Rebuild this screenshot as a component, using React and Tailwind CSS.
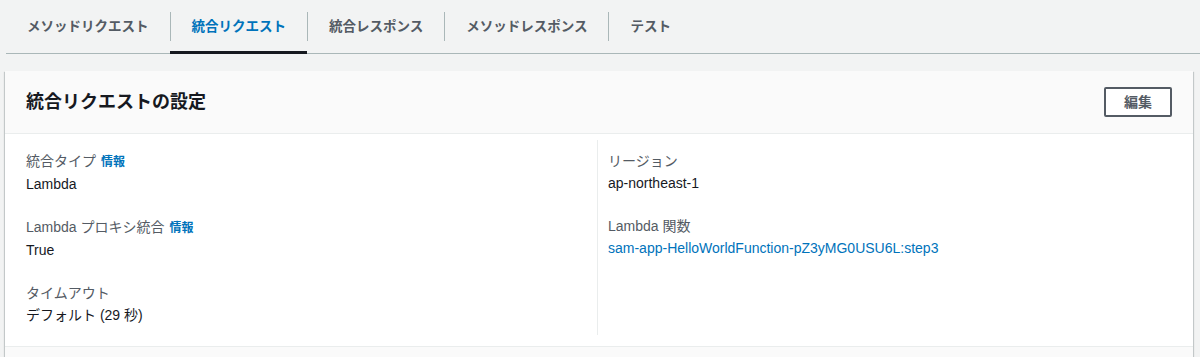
const TABS = [
  { label: 'メソッドリクエスト' },
  { label: '統合リクエスト', active: true },
  { label: '統合レスポンス' },
  { label: 'メソッドレスポンス' },
  { label: 'テスト' },
]

const LEFT = [
  { label: '統合タイプ', info: true, value: 'Lambda' },
  { label: 'Lambda プロキシ統合', info: true, value: 'True' },
  { label: 'タイムアウト', value: 'デフォルト (29 秒)' },
]

const RIGHT = [
  { label: 'リージョン', value: 'ap-northeast-1' },
  { label: 'Lambda 関数', value: 'sam-app-HelloWorldFunction-pZ3yMG0USU6L:step3', link: true },
]

function Field({ label, info, value, link }) {
  return (
    <div>
      <div className="text-[14px] leading-[22px] text-[#545b64]">
        {label}
        {info && <span className="ml-[5px] text-[12px] font-bold text-[#0073bb]">情報</span>}
      </div>
      <div className={`text-[14px] leading-[22px] ${link ? 'text-[#0073bb]' : 'text-[#16191f]'}`}>
        {value}
      </div>
    </div>
  )
}

export default function App() {
  return (
    <div
      className="h-[357px] overflow-hidden bg-[#f2f3f3]"
      style={{ fontFamily: '"Liberation Sans", "Noto Sans CJK JP", sans-serif' }}
    >
      {/* Tabs */}
      <div className="ml-[6px] flex border-b border-[#aab7b8]">
        {TABS.map((t, i) => (
          <div
            key={t.label}
            className={`-mb-px h-[54px] border-b-[3px] ${t.active ? 'border-[#16191f]' : 'border-transparent'}`}
          >
            <div
              className={`mt-[12px] h-[29px] px-[21px] text-[13.5px] font-bold leading-[30px] ${i > 0 ? 'border-l border-[#aab7b8]' : ''} ${t.active ? 'text-[#0073bb]' : 'text-[#545b64]'}`}
            >
              {t.label}
            </div>
          </div>
        ))}
      </div>

      {/* Card */}
      <div className="ml-[5px] mt-[17px] w-[1188px] bg-white shadow-[0_1px_1px_0_rgba(0,28,36,0.3),1px_1px_1px_0_rgba(0,28,36,0.15),-1px_1px_1px_0_rgba(0,28,36,0.15)]">
        <div className="flex h-[63px] items-center justify-between border-b border-[#eaeded] bg-[#fafafa] pl-[21px] pr-[21px]">
          <h2 className="text-[18px] font-bold text-[#16191f]">統合リクエストの設定</h2>
          <button className="h-[30px] rounded-[2px] border-2 border-[#545b64] bg-white px-[18px] text-[14px] font-bold text-[#545b64]">
            編集
          </button>
        </div>

        <div className="flex pb-[11px] pt-[6px]">
          <div className="flex w-[592px] flex-col gap-[21px] pb-[9px] pl-[21px] pt-[10px]">
            {LEFT.map((f) => (
              <Field key={f.label} {...f} />
            ))}
          </div>
          <div className="flex flex-1 flex-col gap-[21px] border-l border-[#eaeded] pl-[10px] pt-[10px]">
            {RIGHT.map((f) => (
              <Field key={f.label} {...f} />
            ))}
          </div>
        </div>

        <div className="h-[20px] border-t border-[#eaeded] bg-[#fafafa]" />
      </div>
    </div>
  )
}
